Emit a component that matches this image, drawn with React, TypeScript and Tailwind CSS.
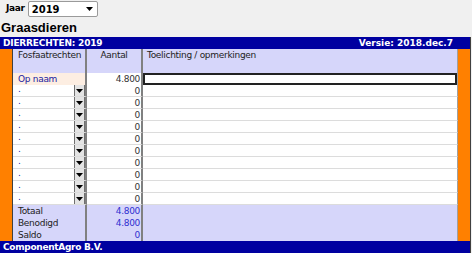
import React from "react";

const Arrow = () => (
  <svg width="7" height="4" viewBox="0 0 7 4"><path d="M0 0h7L3.5 4z" fill="#000" /></svg>
);

export default function App() {
  const rows = Array.from({ length: 10 });
  return (
    <div className="w-[472px] h-[253px] bg-[#f0f0f0] overflow-hidden" style={{ fontFamily: "'DejaVu Sans', sans-serif" }}>
      <div className="h-[18px] flex items-center">
        <span className="ml-[6px] text-[9px] font-bold text-black tracking-[-0.3px]">Jaar</span>
        <div className="ml-[3px] w-[70px] h-[16px] bg-white border border-[#9a9a9a] rounded-[2px] flex items-center justify-between pl-[3px] pr-[4px]">
          <span className="text-[10px] font-bold text-black">2019</span>
          <Arrow />
        </div>
      </div>
      <div className="h-[19px] pl-[1px] text-[13px] font-bold leading-[20px] text-black" style={{ fontFamily: "'Liberation Sans', Arial, sans-serif" }}>Graasdieren</div>
      <div className="w-[471px] border-r border-[#404040]">
        <div className="h-[12px] bg-[#0000a0] flex items-center justify-between px-[3px] text-white text-[9px] font-bold leading-none">
          <span className="tracking-[-0.2px]">DIERRECHTEN: 2019</span>
          <span className="mr-[14px]">Versie: 2018.dec.7</span>
        </div>
        <div className="flex">
          <div className="w-[13px] bg-[#ff8000] border-r border-[#404040]" />
          <div className="flex-1 grid grid-cols-[74px_56px_1fr] text-[9px] leading-[12px] tracking-[-0.3px]">
            <div className="h-[24px] bg-[#d6d6fa] border-r-2 border-[#808080] pl-[5px] text-[#222]">Fosfaatrechten</div>
            <div className="h-[24px] bg-[#d6d6fa] border-r-2 border-[#808080] text-center text-[#222]">Aantal</div>
            <div className="h-[24px] bg-[#d6d6fa] border-r border-[#a0a0a0] pl-[4px] text-[#222]">Toelichting / opmerkingen</div>

            <div className="h-[12px] bg-[#fdeee2] border-r-2 border-[#808080] pl-[5px] text-[#2020a0]">Op naam</div>
            <div className="h-[12px] bg-white border-r-2 border-[#808080] text-right pr-[1px] text-[#333]">4.800</div>
            <div className="h-[12px] bg-white border-r border-[#a0a0a0]">
              <div className="h-[12px] border-2 border-[#222] bg-white" />
            </div>

            {rows.map((_, i) => (
              <React.Fragment key={i}>
                <div className="h-[12px] bg-white border-r-2 border-b border-[#808080] border-b-[#dcdcdc] flex items-center justify-between pl-[5px]">
                  <span className="text-[#2020a0] leading-none -mt-[2px]">.</span>
                  <span className="w-[11px] h-[11px] bg-[#e4e4e4] border-l border-r border-[#707070] flex items-center justify-center">
                    <Arrow />
                  </span>
                </div>
                <div className="h-[12px] bg-white border-r-2 border-b border-[#808080] border-b-[#dcdcdc] text-right pr-[1px] text-[#333]">0</div>
                <div className="h-[12px] bg-white border-r border-b border-[#a0a0a0] border-b-[#dcdcdc]" />
              </React.Fragment>
            ))}

            {[["Totaal", "4.800"], ["Benodigd", "4.800"], ["Saldo", "0"]].map(([l, v]) => (
              <React.Fragment key={l}>
                <div className="h-[12px] bg-[#d6d6fa] border-r-2 border-[#808080] pl-[5px] text-[#222]">{l}</div>
                <div className="h-[12px] bg-[#d6d6fa] border-r-2 border-[#808080] text-right pr-[1px] text-[#3030d0]">{v}</div>
                <div className="h-[12px] bg-[#d6d6fa] border-r border-[#a0a0a0]" />
              </React.Fragment>
            ))}
          </div>
          <div className="w-[12px] bg-[#ff8000]" />
        </div>
        <div className="h-[12px] bg-[#0000a0] flex items-center px-[3px] text-white text-[9px] font-bold leading-none tracking-[-0.3px]">
          ComponentAgro B.V.
        </div>
      </div>
    </div>
  );
}
